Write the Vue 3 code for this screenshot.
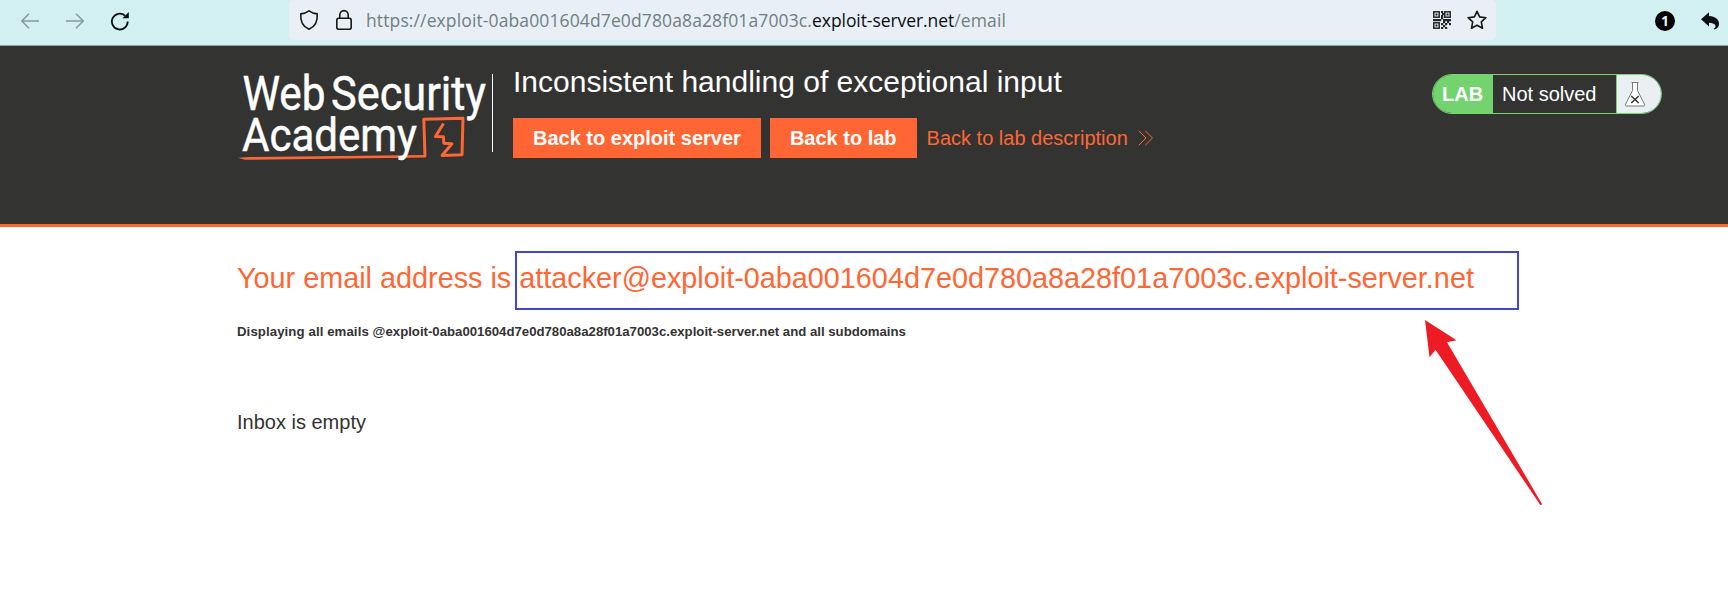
<script setup>
const hash = '0aba001604d7e0d780a8a28f01a7003c'
const host = `exploit-${hash}.exploit-server.net`

const finders = [[0, 0], [11, 0], [0, 11]]
const dots = [
  [8, 0], [8, 4], [9, 2], [8, 6], [0, 8], [2, 8], [4, 8], [6, 8], [10, 8], [12, 8], [14, 8], [16, 8],
  [8, 10], [12, 10], [16, 10], [10, 10], [14, 10], [10, 12], [14, 12], [8, 12], [12, 12],
  [12, 14], [16, 12], [16, 14], [10, 14], [8, 16], [10, 16], [14, 16], [12, 16]
].filter(([x, y]) => x < 8 || y < 8 || (x + y) % 4 === 0 || y === 8)
</script>

<template>
  <div class="page">
    <header class="toolbar">
      <nav class="nav">
        <svg class="dim" width="18" height="16" viewBox="0 0 18 16"><path d="M18 8H1M8 .8L.8 8 8 15.200" /></svg>
        <svg class="dim" width="18" height="16" viewBox="0 0 18 16"><path d="M0 8h17M10 .8L17.200 8 10 15.200" /></svg>
        <svg width="20" height="20" viewBox="0 0 20 20">
          <path d="M17.700 10.500A7.900 7.900 0 1 1 15 4.600" fill="none" stroke="#0c1012" stroke-width="1.800" />
          <path d="M18.800 1v6.200h-6.400z" fill="#0c1012" />
        </svg>
      </nav>
      <div class="address">
        <svg class="line" width="20" height="22" viewBox="0 0 20 22">
          <path d="M10 1.800Q13.500 4.300 18.200 4.900C18.700 11 16.500 17.500 10 20.300C3.500 17.500 1.300 11 1.800 4.900Q6.500 4.300 10 1.800Z" />
        </svg>
        <svg class="line lock" width="18" height="22" viewBox="0 0 18 22">
          <rect x="1.800" y="9.200" width="14.400" height="11" rx="2" />
          <path d="M4.800 9V6a4.200 4.400 0 0 1 8.400 0V9" />
        </svg>
        <div class="url"><span class="sub">https://exploit-{{ hash }}.</span><span class="domain">exploit-server.net</span><span>/email</span></div>
        <svg class="qr" width="18" height="18" viewBox="0 0 18 18">
          <g v-for="([x, y], i) in finders" :key="i">
            <rect :x="x + .8" :y="y + .8" width="5.400" height="5.400" fill="none" stroke="#222628" stroke-width="1.500" />
            <rect :x="x + 2.500" :y="y + 2.500" width="2" height="2" fill="#222628" />
          </g>
          <rect v-for="([x, y], i) in dots" :key="'d' + i" :x="x" :y="y" width="2.200" height="2.200" fill="#222628" />
        </svg>
        <svg class="line star" width="20" height="20" viewBox="0 0 20 20">
          <path d="M10 1.300l2.600 5.600 6.300.8-4.600 4.200 1.200 6.300L10 15.200l-5.500 3 1.200-6.300L1.100 7.700l6.300-.8z" />
        </svg>
      </div>
      <div class="extras">
        <span class="count">1</span>
        <svg width="18" height="18" viewBox="0 0 18 18">
          <path d="M0 7.300L8 .3v3.800c6.200.3 10 3.300 10 7.700 0 3.200-1.700 5-4.700 5.700l-.6-.8c3.700-1.900 2-6-4.700-6v3.800z" fill="#0c1012" />
        </svg>
      </div>
    </header>

    <section class="banner">
      <svg class="logo" width="260" height="100" viewBox="233 68 260 100">
        <g class="logo-text">
          <text x="242.500" y="110" font-size="48" textLength="83" lengthAdjust="spacingAndGlyphs">Web</text>
          <text x="331" y="110" font-size="48" textLength="155" lengthAdjust="spacingAndGlyphs">Security</text>
        </g>
        <path class="mark" d="M425 156.500L423.800 119.300 463 118.300 462 154.800 442 155.500 452 143.800 443.800 143.300 443.500 136.800 435.500 136.500 443.500 123.500" />
        <path d="M238 157.700L250 157 426 155V157.500L330 158.800 245 159.800Z" fill="#ff6633" />
        <text class="logo-text" x="242" y="150.500" font-size="47" textLength="175" lengthAdjust="spacingAndGlyphs">Academy</text>
        <path d="M492.500 74v78" stroke="#fff" />
      </svg>
      <div class="info">
        <h2>Inconsistent handling of exceptional input</h2>
        <div class="actions">
          <a class="button">Back to exploit server</a>
          <a class="button">Back to lab</a>
          <a class="link">Back to lab description
            <svg width="16" height="16" viewBox="0 0 16 16"><path d="M.8.800L8 8 .8 15.200M7.300.800L14.500 8l-7.200 7.200" /></svg>
          </a>
        </div>
      </div>
      <div class="status">
        <strong>LAB</strong>
        <span>Not solved</span>
        <i>
          <svg width="22" height="26" viewBox="0 0 22 26">
            <path d="M7.500 1.500h7M8.500 1.500V9.500L1.500 23.300Q1 25 2.500 25h17Q21 25 20.500 23.300L13.500 9.500V1.500" fill="#fff" stroke="#777b7e" />
            <path d="M7.300 15l7.400 7M14.700 15l-7.400 7" stroke="#333" stroke-width="1.500" />
          </svg>
        </i>
      </div>
    </section>

    <main class="content">
      <h1>Your email address is <span class="marked">attacker@{{ host }}</span></h1>
      <p class="note"><span>Displaying all emails </span>@{{ host }} and all subdomains</p>
      <p class="inbox">Inbox is empty</p>
      <svg class="pointer" width="120" height="190" viewBox="1424 319 120 190">
        <path d="M1425 320L1456.500 340.200 1447 342.200 1542 504 1541.500 505 1540.300 505 1435.500 349.800 1429.500 357.300Z" fill="#ed1c24" />
      </svg>
    </main>
  </div>
</template>

<style>
body { background: #fff; }
</style>

<style scoped>
.page { width: 1728px; height: 612px; overflow: hidden; background: #fff; font-family: "Liberation Sans", Arial, sans-serif; }
svg { display: block; flex: none; }
.toolbar { display: flex; height: 46px; box-sizing: border-box; background: #d2eff2; border-bottom: 1px solid #8fa5a8; }
.nav { display: flex; align-items: center; gap: 27px; width: 289px; height: 41px; padding-left: 21px; box-sizing: border-box; }
.nav svg:last-child { margin-left: -1px; }
.dim path { fill: none; stroke: #869a9e; stroke-width: 1.5; }
.address { display: flex; align-items: center; width: 1207px; height: 40px; padding-left: 10px; box-sizing: border-box; background: #e8eff6; border-radius: 5px; }
.line path, .line rect { fill: none; stroke: #14181a; stroke-width: 1.6; stroke-linejoin: round; }
.lock { margin-left: 16px; }
.url { width: 1067px; height: 40px; margin-left: 13px; font: 17.5px/40px "Open Sans", "Noto Sans", sans-serif; color: #6f7f82; white-space: nowrap; }
.sub { letter-spacing: .12px; }
.domain { letter-spacing: -.07px; color: #0b0e10; }
.url span:last-child { letter-spacing: .15px; }
.star { margin-left: 16px; }
.extras { display: flex; align-items: center; gap: 26px; height: 41px; margin-left: 159px; }
.count { width: 20px; height: 20px; border-radius: 50%; background: #000; color: #e4f6f8; font: bold 14px/20px "Open Sans", sans-serif; text-align: center; }
.banner { display: flex; align-items: flex-start; height: 181px; box-sizing: border-box; padding: 22px 66px 0 233px; background: #333332; border-bottom: 3px solid #ff6633; }
.logo { overflow: visible; }
.logo-text { fill: #fff; stroke: #fff; stroke-width: .5; font-family: Roboto, sans-serif; font-weight: 400; }
.mark { fill: none; stroke: #ff6633; stroke-width: 3; stroke-linejoin: round; }
.info { width: 919px; margin-left: 20px; }
h2 { margin: -3px 0 0; font-size: 30px; line-height: 34px; font-weight: 400; color: #fff; }
.actions { display: flex; margin-top: 19px; gap: 9px; font-size: 20px; line-height: 40px; color: #ff6633; white-space: nowrap; }
.button { padding: 0 20px; background: #ff6633; color: #fff; font-weight: 700; }
.link { display: flex; align-items: center; gap: 10px; padding-left: 1px; }
.link path { fill: none; stroke: #ff6633; stroke-width: 1; }
.status { display: flex; width: 230px; height: 40px; margin-top: 6px; box-sizing: border-box; border: 1px solid #72d36f; border-radius: 20px; overflow: hidden; font-size: 20px; line-height: 38px; color: #fff; }
.status strong { width: 60px; padding-left: 9px; box-sizing: border-box; background: #72d36f; line-height: 39px; }
.status span { width: 123px; padding-left: 9px; box-sizing: border-box; }
.status i { flex: 1; padding: 6px 0 0 7px; background: #eaeff4; border-left: 1px solid #72d36f; }
.content { position: relative; padding-left: 237px; color: #333332; }
h1 { display: flex; align-items: flex-start; margin: 0; padding-top: 24px; font-size: 28.8px; line-height: 55px; font-weight: 400; color: #ff6633; white-space: pre; }
.marked { width: 1004px; height: 59px; margin-left: -4px; padding-left: 2px; box-sizing: border-box; border: 2px solid #3f48cc; line-height: 51px; }
.note { margin: 14px 0 0; font-size: 13.2px; line-height: 16px; font-weight: 700; }
.note span { letter-spacing: .1px; }
.inbox { margin: 70px 0 0; font-size: 20px; line-height: 24px; }
.pointer { position: absolute; left: 1424px; top: 92px; }
</style>
